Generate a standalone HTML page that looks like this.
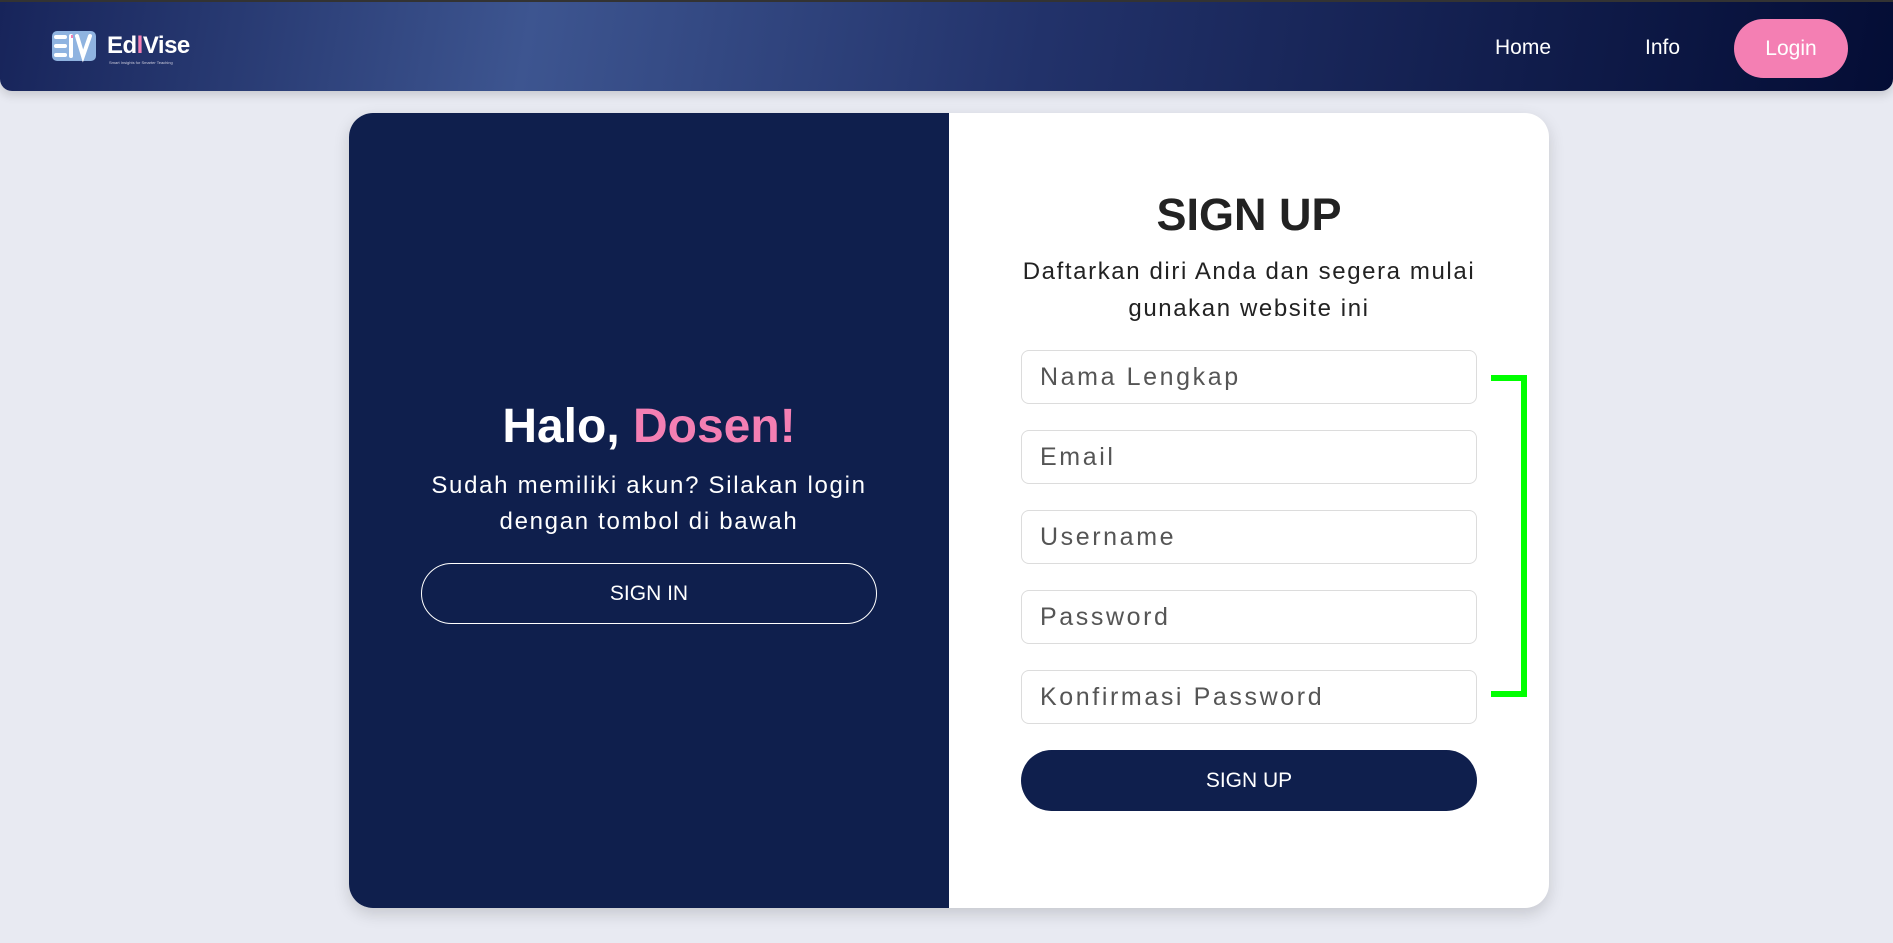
<!DOCTYPE html>
<html><head><meta charset="utf-8"><style>
*{margin:0;padding:0;box-sizing:border-box}
body{width:1893px;height:943px;background:#e8eaf2;font-family:"Liberation Sans",sans-serif;position:relative;overflow:hidden}
.nav{position:absolute;left:0;top:0;width:1893px;height:91px;border-radius:0 0 12px 12px;background:linear-gradient(100deg,#17245a 0%,#3d5590 28%,#22326a 55%,#111d4c 80%,#040d35 100%);box-shadow:0 4px 10px rgba(0,0,0,.15);border-top:2px solid #333}
.nav a{position:absolute;color:#fff;font-size:21px;top:34px;text-decoration:none}
.login{position:absolute;left:1734px;top:17px;width:114px;height:59px;border-radius:30px;background:#f47fb3;color:#fff;font-size:21px;text-align:center;line-height:59px}
.card{position:absolute;left:349px;top:113px;width:1200px;height:795px;border-radius:24px;background:#fff;overflow:hidden;box-shadow:0 6px 16px rgba(0,0,0,.15)}
.left{position:absolute;left:0;top:0;width:600px;height:795px;background:#0f1f4d;color:#fff;text-align:center}
.in{position:absolute;left:672px;width:456px;height:54px;border:1px solid #dcdcdc;border-radius:8px;font-size:25px;letter-spacing:2.6px;color:#555;padding-left:18px;line-height:52px}
.c{position:absolute;text-align:center}
</style></head><body>
<div class="nav">
 <svg style="position:absolute;left:50px;top:27px" width="48" height="34" viewBox="0 0 48 34"><rect x="2" y="2" width="44" height="30" rx="5" fill="#8fb3e0"/><g stroke="#fff" stroke-width="4" fill="none" stroke-linecap="round"><path d="M6 8h9M6 17h9M6 26h9"/><path d="M21 7v20"/><path d="M27 7l6 20 7-20"/></g><path d="M22 6v3" stroke="#f47fb3" stroke-width="2"/></svg>
 <div style="position:absolute;left:107px;top:30px;color:#fff;font-weight:bold;font-size:24px;letter-spacing:-0.5px">Ed<span style="color:#f47fb3">l</span>Vise</div>
 <div style="position:absolute;left:109px;top:58px;color:#ccd;font-size:4px">Smart Insights for Smarter Teaching</div>
 <a style="left:1495px">Home</a>
 <a style="left:1645px">Info</a>
 <div class="login">Login</div>
</div>
<div class="card">
 <div class="left">
  <div class="c" style="left:0;width:600px;top:286px;font-size:48px;font-weight:bold">Halo, <span style="color:#f47fb3">Dosen!</span></div>
  <div class="c" style="left:0;width:600px;top:355px;font-size:24px;letter-spacing:1.7px;line-height:36px">Sudah memiliki akun? Silakan login<br>dengan tombol di bawah</div>
  <div class="c" style="left:72px;top:450px;width:456px;height:61px;border:1px solid #fff;border-radius:31px;font-size:21px;line-height:59px">SIGN IN</div>
 </div>
 <div class="c" style="left:600px;width:600px;top:76px;font-size:45px;font-weight:bold;color:#222">SIGN UP</div>
 <div class="c" style="left:600px;width:600px;top:140px;font-size:24px;letter-spacing:1.6px;line-height:37px;color:#222">Daftarkan diri Anda dan segera mulai<br>gunakan website ini</div>
 <div class="in" style="top:237px">Nama Lengkap</div>
 <div class="in" style="top:317px">Email</div>
 <div class="in" style="top:397px">Username</div>
 <div class="in" style="top:477px">Password</div>
 <div class="in" style="top:557px">Konfirmasi Password</div>
 <div class="c" style="left:672px;top:637px;width:456px;height:61px;border-radius:31px;background:#0f1f4d;color:#fff;font-size:21px;line-height:61px">SIGN UP</div>
</div>
<div style="position:absolute;left:1491px;top:375px;width:36px;height:322px;border:6px solid #0f0;border-left:none"></div>
</body></html>
